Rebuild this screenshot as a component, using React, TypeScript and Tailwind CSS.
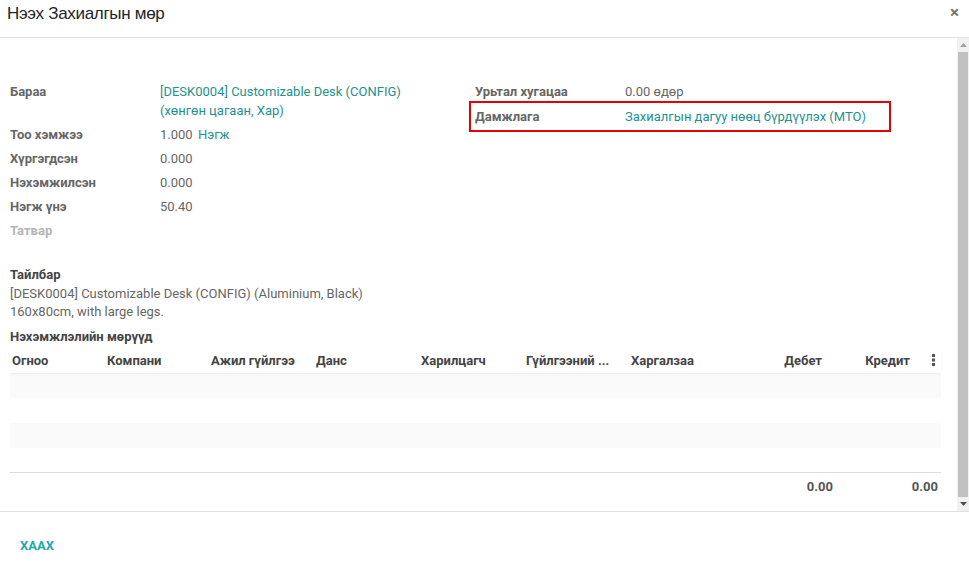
import React from "react";

const teal = "text-[#1e928d]";

function Field({ label, children, muted }: { label: string; children?: React.ReactNode; muted?: boolean }) {
  return (
    <div className="flex min-h-[24px]">
      <div className={`w-[150px] shrink-0 font-bold ${muted ? "text-[#b5b5b5]" : "text-[#666]"}`}>{label}</div>
      <div className="text-[#666]">{children}</div>
    </div>
  );
}

export default function App() {
  const cols = [
    { t: "Огноо", w: "w-[95px]" },
    { t: "Компани", w: "w-[104px]" },
    { t: "Ажил гүйлгээ", w: "w-[105px]" },
    { t: "Данс", w: "w-[105px]" },
    { t: "Харилцагч", w: "w-[105px]" },
    { t: "Гүйлгээний ...", w: "w-[105px]" },
    { t: "Харгалзаа", w: "w-[105px]" },
  ];
  return (
    <div className="w-[969px] h-[574px] bg-white flex flex-col overflow-hidden text-[13px] leading-[19px]" style={{ fontFamily: "Roboto, 'Noto Sans', sans-serif" }}>
      {/* Header */}
      <div className="h-[38px] shrink-0 flex items-start justify-between border-b border-[#e2e2e2] pl-[7px] pr-[10px]">
        <div className="text-[17px] leading-[20px] pt-[4px] text-[#212529] tracking-[-0.3px]" style={{ fontFamily: "'Liberation Sans Narrow', 'Liberation Sans', sans-serif" }}>Нээх Захиалгын мөр</div>
        <div className="text-[17px] leading-[20px] font-bold text-[#777] pt-[2px]">×</div>
      </div>

      {/* Body */}
      <div className="flex h-[474px] shrink-0 border-b border-[#dee2e6]">
        <div className="flex-1 pl-[10px] pr-[16px] pt-[44px]">
          <div className="flex">
            <div className="w-[459px] shrink-0">
              <div className="flex min-h-[24px] mb-[5px]">
                <div className="w-[150px] shrink-0 font-bold text-[#666]">Бараа</div>
                <div className={teal}>[DESK0004] Customizable Desk (CONFIG)<br />(хөнгөн цагаан, Хар)</div>
              </div>
              <Field label="Тоо хэмжээ">1.000 <span className={`ml-[2px] ${teal}`}>Нэгж</span></Field>
              <Field label="Хүргэгдсэн">0.000</Field>
              <Field label="Нэхэмжилсэн">0.000</Field>
              <Field label="Нэгж үнэ">50.40</Field>
              <Field label="Татвар" muted />
            </div>
            <div className="w-[422px]">
              <div className="flex min-h-[24px] pl-[6px]">
                <div className="w-[150px] shrink-0 font-bold text-[#666]">Урьтал хугацаа</div>
                <div className="text-[#666]">0.00 өдөр</div>
              </div>
              <div className="flex items-center h-[31px] border-2 border-[#e60000] pl-[4px] -mt-[5px]">
                <div className="w-[150px] shrink-0 font-bold text-[#666]">Дамжлага</div>
                <div className={teal}>Захиалгын дагуу нөөц бүрдүүлэх (MTO)</div>
              </div>
            </div>
          </div>

          <div className="mt-[20px] font-bold text-[#444]">Тайлбар</div>
          <div className="text-[#666] leading-[18px] mt-[1px]">[DESK0004] Customizable Desk (CONFIG) (Aluminium, Black)<br />160x80cm, with large legs.</div>

          <div className="mt-[6px] font-bold text-[#444]">Нэхэмжлэлийн мөрүүд</div>

          <div className="mt-[1px] w-[931px]">
            <div className="flex h-[26px] items-center font-bold text-[#444] shadow-[0_1px_2px_rgba(0,0,0,0.06)] relative">
              {cols.map((c) => (
                <div key={c.t} className={`${c.w} shrink-0 pl-[2px]`}>{c.t}</div>
              ))}
              <div className="w-[88px] text-right">Дебет</div>
              <div className="w-[88px] text-right">Кредит</div>
              <div className="flex-1 flex justify-center pl-[14px]">
                <svg width="4" height="12" viewBox="0 0 4 12"><rect x="1" y="0" width="3" height="3" fill="#555" /><rect x="1" y="4.5" width="3" height="3" fill="#555" /><rect x="1" y="9" width="3" height="3" fill="#555" /></svg>
              </div>
            </div>
            <div className="h-[25px] bg-[#fafafa]" />
            <div className="h-[25px] bg-white" />
            <div className="h-[25px] bg-[#fafafa]" />
            <div className="h-[25px] bg-white border-b border-[#dcdcdc]" />
            <div className="flex h-[27px] items-center font-bold text-[#555]">
              <div className="w-[725px]" />
              <div className="w-[98px] text-right">0.00</div>
              <div className="w-[105px] text-right">0.00</div>
            </div>
          </div>
        </div>

        {/* Scrollbar */}
        <div className="w-[12px] shrink-0 bg-[#f1f1f1] flex flex-col items-center">
          <div className="h-[14px] flex items-center justify-center">
            <svg width="7" height="4" viewBox="0 0 7 4"><polygon points="3.5,0 7,4 0,4" fill="#a3a3a3" /></svg>
          </div>
          <div className="flex-1 w-[10px] bg-[#c1c1c1]" />
          <div className="h-[14px] flex items-center justify-center">
            <svg width="7" height="4" viewBox="0 0 7 4"><polygon points="0,0 7,0 3.5,4" fill="#505050" /></svg>
          </div>
        </div>
      </div>

      {/* Footer */}
      <div className="flex-1 pl-[20px] pt-[24px]">
        <div className="font-bold text-[#21a9ad] text-[13px]">ХААХ</div>
      </div>
    </div>
  );
}
